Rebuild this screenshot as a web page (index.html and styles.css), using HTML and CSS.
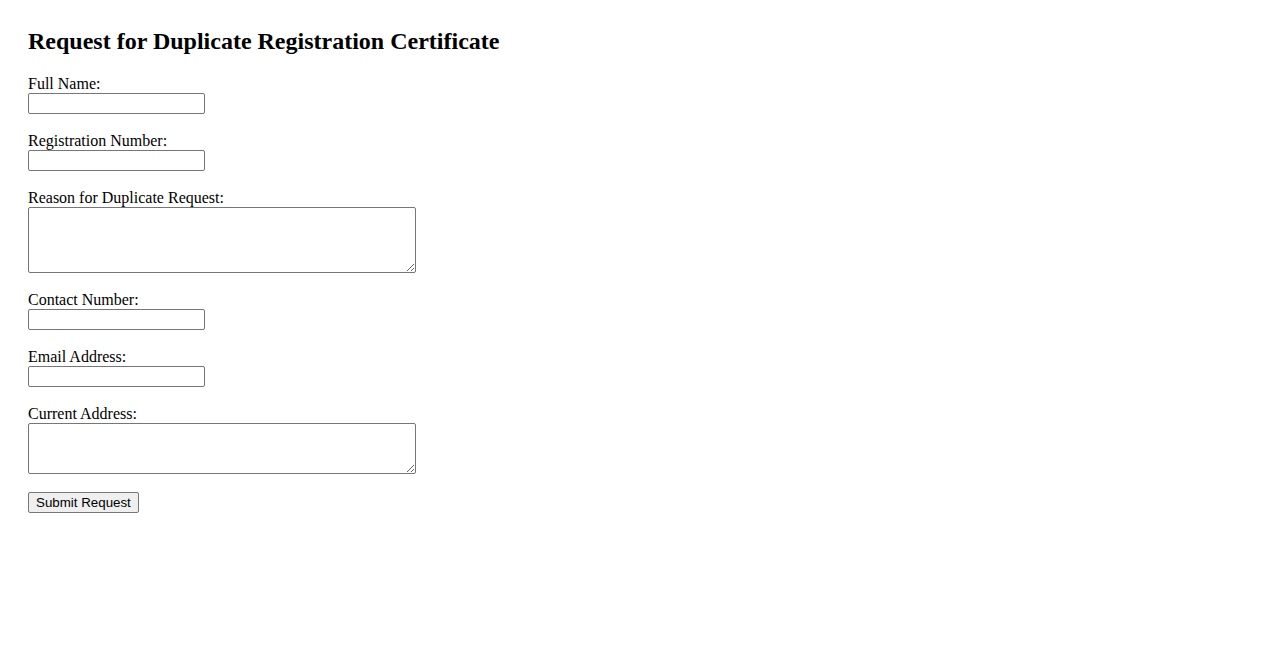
FILE: index.html
```html
<!DOCTYPE html>
<html lang="en">
<head>
    <meta charset="UTF-8">
    <meta name="viewport" content="width=device-width, initial-scale=1.0">
    <title>Request for Duplicate Registration Certificate</title>
    <link rel="stylesheet" href="styles.css">
</head>
<body>
    <h2 class="title">Request for Duplicate Registration Certificate</h2>
    <form class="request-form">
        <div class="field">
            <label for="full-name">Full Name:</label>
            <input type="text" id="full-name" name="full_name" class="text-input">
        </div>
        <div class="field">
            <label for="reg-number">Registration Number:</label>
            <input type="text" id="reg-number" name="registration_number" class="text-input">
        </div>
        <div class="field">
            <label for="reason">Reason for Duplicate Request:</label>
            <textarea id="reason" name="reason" class="text-area reason"></textarea>
        </div>
        <div class="field">
            <label for="contact">Contact Number:</label>
            <input type="text" id="contact" name="contact_number" class="text-input">
        </div>
        <div class="field">
            <label for="email">Email Address:</label>
            <input type="email" id="email" name="email" class="text-input">
        </div>
        <div class="field">
            <label for="address">Current Address:</label>
            <textarea id="address" name="address" class="text-area address"></textarea>
        </div>
        <button type="submit" class="submit-btn">Submit Request</button>
    </form>
</body>
</html>
```

FILE: styles.css
```css
body {
    font-family: "Liberation Serif", "Times New Roman", serif;
    font-size: 16px;
    color: #000;
    background-color: #fff;
    margin: 0;
    padding: 27px 28px;
}

.title {
    font-size: 24px;
    font-weight: bold;
    line-height: 28px;
    margin: 0 0 20px;
}

.request-form {
    display: flex;
    flex-direction: column;
    align-items: flex-start;
}

.field {
    display: flex;
    flex-direction: column;
    align-items: flex-start;
    margin-bottom: 18px;
}

    .field label {
        line-height: 18px;
    }

.text-input,
.text-area,
.submit-btn {
    box-sizing: border-box;
    margin: 0;
    border: 1px solid #767676;
    border-radius: 2px;
    background-color: #fff;
    font-family: "Liberation Sans", Arial, sans-serif;
    font-size: 13.33px;
}

.text-input {
    width: 177px;
    height: 21px;
    padding: 1px 2px;
}

.text-area {
    width: 388px;
    padding: 2px;
    font-family: "Liberation Mono", monospace;
    resize: both;
}

    .text-area.reason {
        height: 66px;
    }

    .text-area.address {
        height: 51px;
    }

.submit-btn {
    height: 21px;
    padding: 1px 7px;
    background-color: #efefef;
    color: #000;
}
```
